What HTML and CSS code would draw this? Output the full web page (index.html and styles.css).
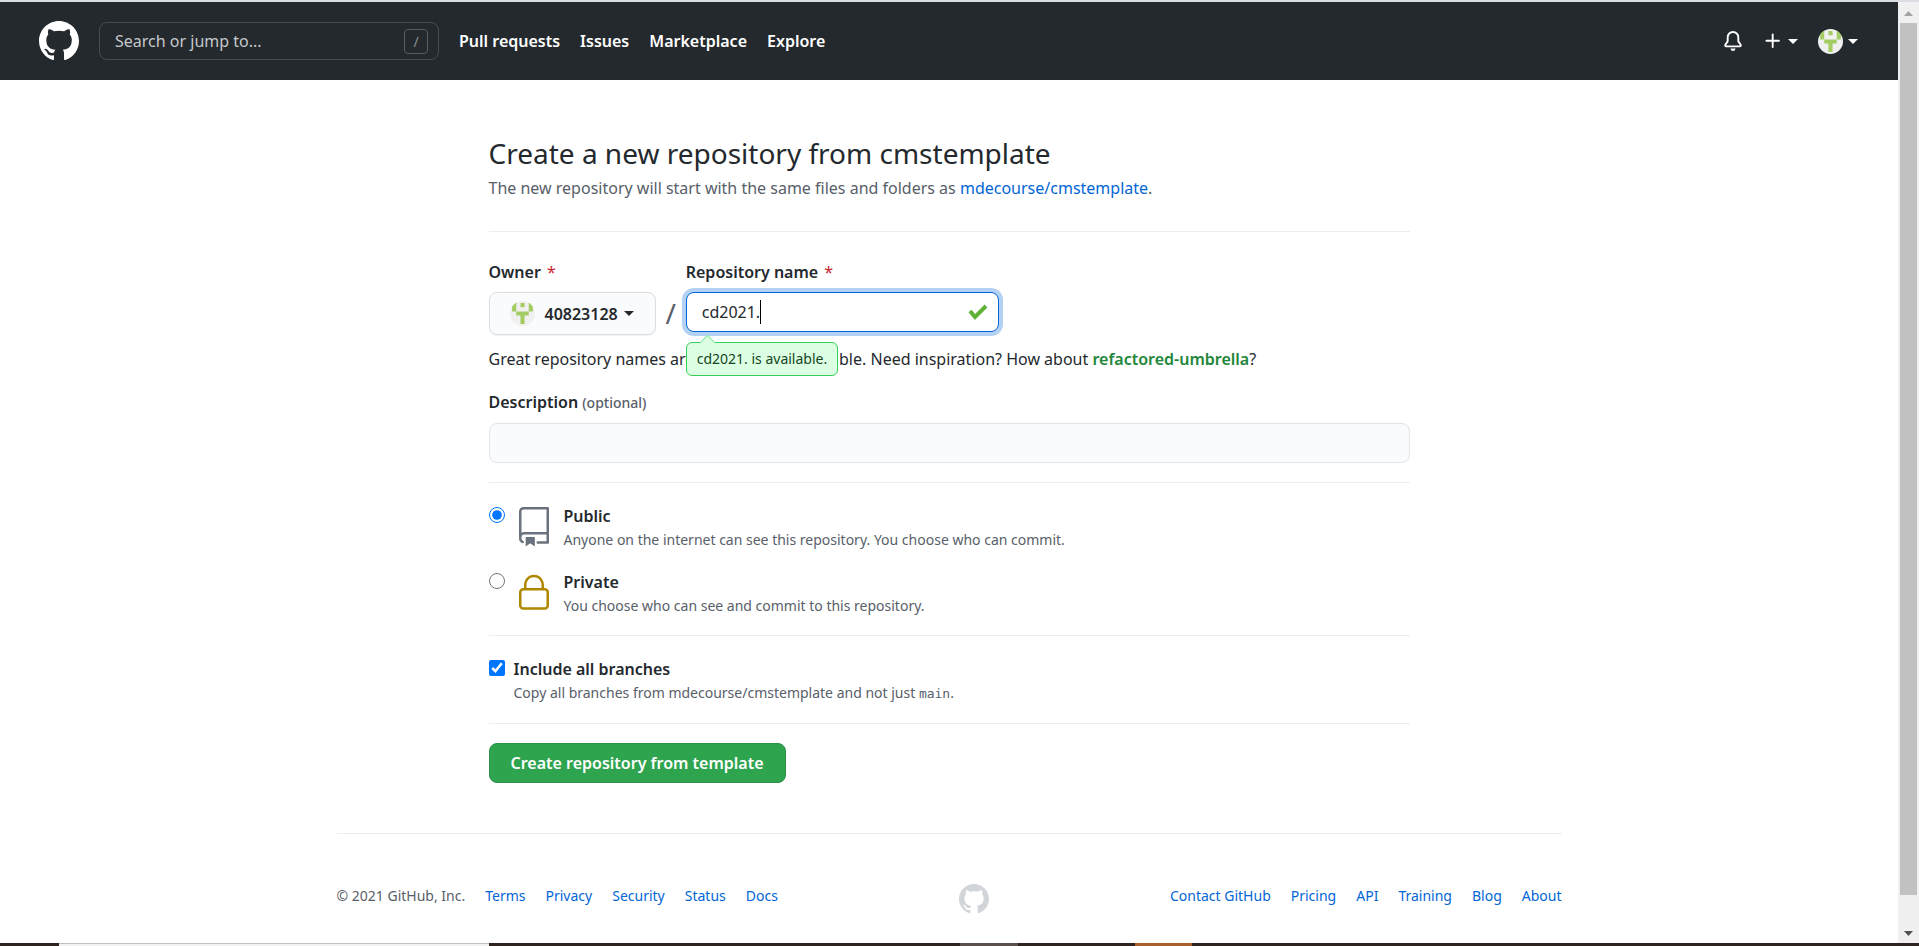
FILE: index.html
```html
<!DOCTYPE html>
<html lang="en">
<head>
<meta charset="utf-8">
<title>Create a new repository from cmstemplate</title>
<link rel="stylesheet" href="styles.css">
</head>
<body>
<svg class="sprite" aria-hidden="true">
  <symbol id="mark" viewBox="0 0 16 16"><path fill-rule="evenodd" d="M8 0C3.58 0 0 3.58 0 8c0 3.54 2.29 6.53 5.47 7.59.4.07.55-.17.55-.38 0-.19-.01-.82-.01-1.49-2.01.37-2.53-.49-2.69-.94-.09-.23-.48-.94-.82-1.13-.28-.15-.68-.52-.01-.53.63-.01 1.08.58 1.23.82.72 1.21 1.87.87 2.33.66.07-.52.28-.87.51-1.07-1.78-.2-3.64-.89-3.64-3.95 0-.87.31-1.59.82-2.15-.08-.2-.36-1.02.08-2.12 0 0 .67-.21 2.2.82.64-.18 1.32-.27 2-.27.68 0 1.36.09 2 .27 1.53-1.04 2.2-.82 2.2-.82.44 1.1.16 1.92.08 2.12.51.56.82 1.27.82 2.15 0 3.07-1.87 3.75-3.65 3.95.29.25.54.73.54 1.48 0 1.07-.01 1.93-.01 2.2 0 .21.15.46.55.38A8.013 8.013 0 0016 8c0-4.42-3.58-8-8-8z"/></symbol>
  <symbol id="avatar" viewBox="0 0 420 420"><clipPath id="round"><circle cx="210" cy="210" r="210"/></clipPath><g clip-path="url(#round)"><path fill="#f0f0f0" d="M0 0h420v420H0z"/><path fill="#a3cd62" d="M35 35h70v140H35zM175 35h70v70h-70zM315 35h70v140h-70zM105 175h210v70h-70v140h-70V245h-70z"/></g></symbol>
</svg>
<div class="window-edge"></div>
<div class="viewport">
  <div class="page">
    <header class="header">
      <a class="logo" href="#" aria-label="Homepage"><svg width="40" height="40"><use href="#mark"/></svg></a>
      <label class="search">
        <input type="text" placeholder="Search or jump to..." aria-label="Search or jump to">
        <span class="slash-key">/</span>
      </label>
      <nav class="nav">
        <a href="#">Pull requests</a>
        <a href="#">Issues</a>
        <a href="#">Marketplace</a>
        <a href="#">Explore</a>
      </nav>
      <div class="actions">
        <a href="#" aria-label="Notifications"><svg width="20" height="20" viewBox="0 0 16 16"><path d="M8 16a2 2 0 001.985-1.750c.017-.137-.097-.25-.235-.25h-3.5c-.138 0-.252.113-.235.25A2 2 0 008 16z"/><path fill-rule="evenodd" d="M8 1.5A3.5 3.5 0 004.5 5v2.947c0 .346-.102.683-.294.97l-1.703 2.556a.018.018 0 00-.003.01l.001.006c0 .002.002.004.004.006a.017.017 0 00.006.004l.007.001h10.964l.007-.001a.016.016 0 00.006-.004.016.016 0 00.004-.006l.001-.007a.017.017 0 00-.003-.01l-1.703-2.554a1.75 1.75 0 01-.294-.97V5A3.5 3.5 0 008 1.5zM3 5a5 5 0 0110 0v2.947c0 .05.015.098.042.139l1.703 2.555A1.518 1.518 0 0113.482 13H2.518a1.518 1.518 0 01-1.263-2.36l1.703-2.554A.25.25 0 003 7.947V5z"/></svg></a>
        <button class="menu" type="button" aria-label="Create new"><svg width="20" height="20" viewBox="0 0 16 16"><path d="M7.75 2a.75.75 0 01.75.75V7h4.25a.75.75 0 010 1.5H8.5v4.25a.75.75 0 01-1.5 0V8.500H2.75a.75.75 0 010-1.500H7V2.75A.75.75 0 017.75 2z"/></svg><span class="caret"></span></button>
        <button class="menu" type="button" aria-label="Account"><svg width="25" height="25"><use href="#avatar"/></svg><span class="caret"></span></button>
      </div>
    </header>

    <main class="content">
      <div class="subhead">
        <h1>Create a new repository from cmstemplate</h1>
        <p>The new repository will start with the same files and folders as <a href="#">mdecourse/cmstemplate</a>.</p>
      </div>
      <form>
        <div class="names">
          <div class="field">
            <label for="owner">Owner <span class="required">*</span></label>
            <button class="owner" id="owner" type="button"><svg width="25" height="25"><use href="#avatar"/></svg>40823128<span class="caret"></span></button>
          </div>
          <span class="divider">/</span>
          <div class="field">
            <label for="repo">Repository name <span class="required">*</span></label>
            <div class="repo">
              <input id="repo" class="text-input focused" type="text" value="cd2021.">
              <span class="typed" aria-hidden="true"><span class="typed-text">cd2021.</span></span>
              <svg class="ok" width="20" height="16" viewBox="0 0 20 16"><path d="M2 7l5 6L18 2" fill="none" stroke="#5fb236" stroke-width="4"/></svg>
              <div class="tip" role="status">cd2021. is available.</div>
            </div>
          </div>
        </div>
        <p class="hint">Great repository names are short and memorable. Need inspiration? How about <strong>refactored-umbrella</strong>?</p>
        <div class="field">
          <label for="description">Description <span class="optional">(optional)</span></label>
          <input id="description" class="text-input description" type="text">
        </div>

        <div class="section visibility">
          <label class="choice">
            <input type="radio" name="visibility" checked>
            <svg class="repo-icon" width="40" height="40" viewBox="0 0 24 24"><path fill-rule="evenodd" d="M3 2.75A2.75 2.75 0 015.75 0h14.5a.75.75 0 01.75.75v20.5a.75.75 0 01-.75.75h-6a.75.75 0 010-1.5h5.25v-4H6A1.5 1.5 0 004.5 18v.75c0 .716.43 1.334 1.05 1.605a.75.75 0 01-.6 1.374A3.25 3.25 0 013 18.75v-16zM19.5 1.5V15H6c-.546 0-1.059.146-1.5.401V2.75c0-.69.56-1.25 1.25-1.25H19.5z"/><path d="M7 18.25a.25.25 0 01.25-.25h5a.25.25 0 01.25.25v5.01a.25.25 0 01-.397.201l-2.206-1.604a.25.25 0 00-.294 0L7.397 23.46a.25.25 0 01-.397-.2v-5.01z"/></svg>
            <span class="choice-text"><span class="choice-title">Public</span><span class="note">Anyone on the internet can see this repository. You choose who can commit.</span></span>
          </label>
          <label class="choice">
            <input type="radio" name="visibility">
            <svg class="lock-icon" width="40" height="40" viewBox="0 0 24 24"><path fill-rule="evenodd" d="M6 9V7.25C6 3.845 8.503 1 12 1s6 2.845 6 6.25V9h.5a2.5 2.5 0 012.5 2.5v8a2.5 2.5 0 01-2.5 2.5h-13A2.5 2.5 0 013 19.5v-8A2.5 2.5 0 015.5 9H6zm1.5-1.75C7.5 4.58 9.422 2.5 12 2.5c2.578 0 4.5 2.08 4.5 4.75V9h-9V7.25zm-3 4.25a1 1 0 011-1h13a1 1 0 011 1v8a1 1 0 01-1 1h-13a1 1 0 01-1-1v-8z"/></svg>
            <span class="choice-text"><span class="choice-title">Private</span><span class="note">You choose who can see and commit to this repository.</span></span>
          </label>
        </div>

        <div class="section branches">
          <label class="choice">
            <input type="checkbox" checked>
            <span class="choice-text"><span class="choice-title">Include all branches</span><span class="note">Copy all branches from mdecourse/cmstemplate and not just <code>main</code>.</span></span>
          </label>
        </div>

        <div class="section submit">
          <button class="primary" type="submit">Create repository from template</button>
        </div>
      </form>
    </main>

    <footer class="footer">
      <div class="links">
        <span>© 2021 GitHub, Inc.</span>
        <a href="#">Terms</a>
        <a href="#">Privacy</a>
        <a href="#">Security</a>
        <a href="#">Status</a>
        <a href="#">Docs</a>
      </div>
      <a class="footer-mark" href="#" aria-label="GitHub"><svg width="30" height="30"><use href="#mark"/></svg></a>
      <div class="links">
        <a href="#">Contact GitHub</a>
        <a href="#">Pricing</a>
        <a href="#">API</a>
        <a href="#">Training</a>
        <a href="#">Blog</a>
        <a href="#">About</a>
      </div>
    </footer>
  </div>
  <div class="scrollbar" aria-hidden="true">
    <svg width="21" height="21" viewBox="0 0 21 21"><path fill="#a3a3a3" d="M6 14l4.500-5 4.500 5z"/></svg>
    <div class="track"><div class="thumb"></div></div>
    <svg width="21" height="21" viewBox="0 0 21 21"><path fill="#505050" d="M6 9l4.500 5 4.500-5z"/></svg>
  </div>
</div>
<div class="taskbar" aria-hidden="true">
  <span class="dark" style="flex-grow:59"></span>
  <span class="search-box" style="flex-grow:430"></span>
  <span class="dark" style="flex-grow:471"></span>
  <span class="grey" style="flex-grow:58"></span>
  <span class="dark" style="flex-grow:117"></span>
  <span class="orange" style="flex-grow:57"></span>
  <span class="dark" style="flex-grow:727"></span>
</div>
</body>
</html>
```
FILE: styles.css
```css
* { box-sizing: border-box; }

body {
  margin: 0;
  min-height: 100vh;
  display: flex;
  flex-direction: column;
  background: #fff;
  color: #24292e;
  font: 16px/24px "Noto Sans", "Open Sans", sans-serif;
}

h1, p { margin: 0; }
a { color: #0366d6; text-decoration: none; }
svg { display: block; flex: none; }
button, input { font: inherit; color: inherit; }
button { cursor: pointer; }

.sprite { position: absolute; width: 0; height: 0; }
.window-edge { height: 2px; background: #dbdce3; }
.viewport { flex: 1; display: flex; }
.page { flex: 1; min-width: 0; }

.caret {
  border: 5px solid transparent;
  border-top-color: currentColor;
  border-bottom: 0;
}

/* Header */
.header {
  display: flex;
  align-items: center;
  gap: 20px;
  padding: 19px 40px 19px 39px;
  background: #24292e;
  color: #fff;
}
.header a { color: #fff; }
.header svg { fill: currentColor; }
.search {
  display: flex;
  align-items: center;
  width: 340px;
  height: 38px;
  padding: 0 10px 0 15px;
  border: 1px solid #444d56;
  border-radius: 8px;
}
.search input {
  flex: 1;
  min-width: 0;
  padding: 0;
  border: 0;
  outline: 0;
  background: none;
}
.search input::placeholder { color: #c6c8ca; opacity: 1; }
.slash-key {
  width: 24px;
  height: 25px;
  border: 1px solid #555d66;
  border-radius: 4px;
  color: #8b9096;
  font-size: 14px;
  line-height: 23px;
  text-align: center;
}
.nav { display: flex; gap: 20px; font-weight: 600; }
.actions { display: flex; align-items: center; gap: 20px; margin-left: auto; }
.menu {
  display: flex;
  align-items: center;
  gap: 5px;
  padding: 0;
  border: 0;
  background: none;
  color: #fff;
}

/* Form */
.content {
  max-width: 921px;
  margin: 0 auto;
  padding-top: 51px;
}
.subhead { padding-bottom: 31px; border-bottom: 1px solid #eaecef; }
.subhead h1 { font-size: 28px; font-weight: 400; line-height: 45px; }
.subhead p { color: #586069; }

.names { display: flex; align-items: flex-end; padding-top: 28px; }
.field { display: flex; flex-direction: column; align-items: flex-start; gap: 8px; }
.field label { font-weight: 600; }
.required { margin-left: 2px; color: #cb2431; font-weight: 400; }
.optional { color: #586069; font-size: 14px; font-weight: 500; }
.owner {
  display: flex;
  align-items: center;
  height: 43px;
  padding: 0 21px 0 20px;
  border: 1px solid #dadde0;
  border-radius: 8px;
  background: #fafbfc;
  font-weight: 600;
  box-shadow: 0 1px 0 #f3f4f5;
}
.owner svg { margin-right: 10px; }
.owner .caret { margin-left: 6px; }
.divider { width: 30px; color: #586069; font-size: 28px; line-height: 43px; text-align: center; }
.repo { position: relative; margin-bottom: 3px; }
.text-input {
  height: 40px;
  padding: 0 15px;
  border: 1px solid #e1e4e8;
  border-radius: 8px;
  outline: 0;
  background: #fafbfc;
}
.repo .text-input { display: block; width: 313px; }
.focused { border: 1px solid #0366d6; background: #fff; box-shadow: 0 0 0 4px #b3d1f3; }
.typed { position: absolute; top: 8px; left: 16px; pointer-events: none; }
.typed-text { display: block; color: transparent; border-right: 1px solid #000; }
.ok { position: absolute; top: 12px; right: 11px; }
.tip {
  position: absolute;
  top: 50px;
  left: 0;
  padding: 5px 10px;
  border: 1px solid #34d058;
  border-radius: 6px;
  background: #dcffe4;
  color: #144620;
  font-size: 14px;
  line-height: 22px;
  white-space: nowrap;
}
.tip::before {
  content: "";
  position: absolute;
  top: -6px;
  left: 15px;
  width: 10px;
  height: 10px;
  border: solid #85e89d;
  border-width: 1px 0 0 1px;
  background: #dcffe4;
  transform: rotate(45deg);
}
.hint { padding: 12px 0 19px; }
.hint strong { color: #22863a; font-weight: 600; }
.description { width: 100%; }

.section { border-top: 1px solid #eaecef; }
.visibility { margin-top: 19px; padding: 21px 0 17px; display: grid; gap: 18px; }
.branches { padding: 21px 0 18px; }
.submit { padding: 19px 0 50px; }
.choice { display: flex; align-items: flex-start; }
.choice input { width: 16px; height: 16px; margin: 3px 9px 0 0; accent-color: #0075ff; }
.choice svg { margin: 3px 10px 0 0; }
.choice-text { display: grid; }
.choice-title { font-weight: 600; }
.note { color: #586069; font-size: 14px; }
.note code { font: 13px "DejaVu Sans Mono", monospace; }
.repo-icon { fill: #6a737d; }
.lock-icon { fill: #b08800; }
.primary {
  height: 40px;
  padding: 0 21px;
  border: 1px solid #2a9147;
  border-radius: 8px;
  background: #2ea44f;
  color: #fff;
  font-weight: 600;
}

/* Footer */
.footer {
  display: flex;
  justify-content: space-between;
  max-width: 1225px;
  margin: 0 auto;
  padding: 50px 0 24px;
  border-top: 1px solid #eaecef;
  color: #586069;
  font-size: 14px;
}
.links { display: flex; gap: 20px; }
.footer-mark svg { fill: #d1d5da; }

/* Window chrome */
.scrollbar {
  display: flex;
  flex-direction: column;
  width: 21px;
  background: #f0f0f0;
}
.track { flex: 1; padding: 0 2px; }
.thumb { height: 97%; background: #c1c1c1; }
.taskbar { display: flex; height: 3px; }
.dark { background: #2e231f; }
.search-box { border-top: 1px solid #c0c0c0; background: #f2f2f2; }
.grey { background: #594f4b; }
.orange { background: #a85f2a; }
```
